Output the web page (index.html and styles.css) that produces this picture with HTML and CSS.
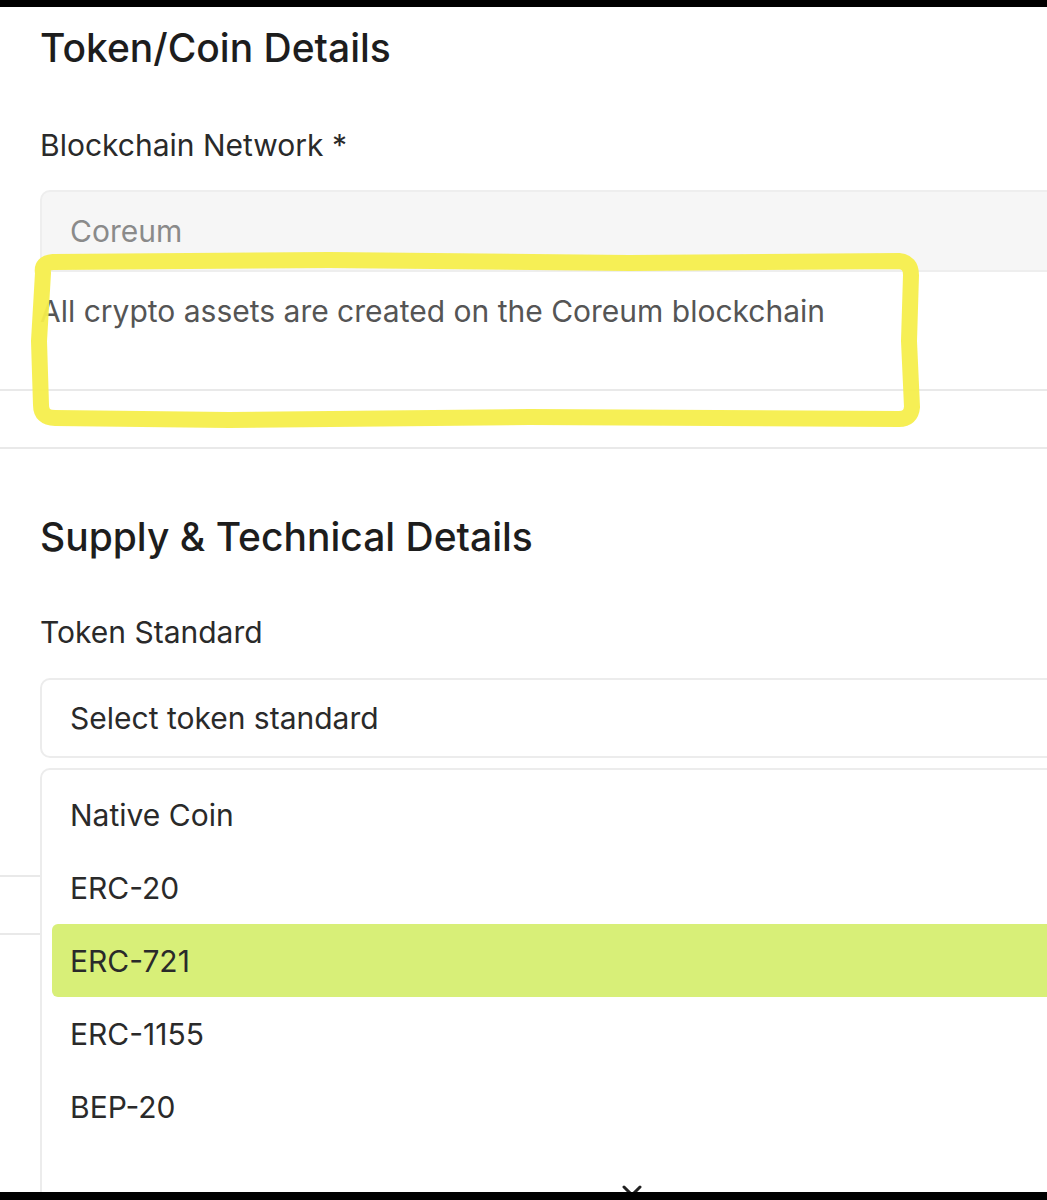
FILE: index.html
```html
<!DOCTYPE html>
<html>
<head>
<meta charset="utf-8">
<link rel="stylesheet" href="styles.css">
</head>
<body>
<div class="topbar"></div>
<div class="screen">
  <section class="section first">
    <h2 class="title">Token/Coin Details</h2>
    <div class="label">Blockchain Network *</div>
    <div class="input disabled">Coreum</div>
    <div class="helper">All crypto assets are created on the Coreum blockchain</div>
  </section>
  <div class="rule rule-a"></div>
  <div class="rule rule-b"></div>
  <section class="section second">
    <h2 class="title">Supply &amp; Technical Details</h2>
    <div class="label">Token Standard</div>
    <div class="select-wrap">
      <div class="input select">Select token standard</div>
      <ul class="menu">
        <li class="item">Native Coin</li>
        <li class="item">ERC-20</li>
        <li class="item active">ERC-721</li>
        <li class="item">ERC-1155</li>
        <li class="item">BEP-20</li>
        <li class="chev"><svg width="22" height="14" viewBox="0 0 22 14"><path d="M3 3 L11 11 L19 3" fill="none" stroke="#222" stroke-width="3" stroke-linecap="round" stroke-linejoin="round"/></svg></li>
      </ul>
    </div>
    <div class="rule rule-c"></div>
    <div class="rule rule-d"></div>
  </section>
  <svg class="annot" width="900" height="190" viewBox="0 0 900 190">
    <path d="M14 22 Q12 12 24 11 L300 9 L600 12 L870 10 Q882 11 882 24 L880 90 L883 156 Q882 168 870 168 L500 166 L200 169 L26 167 Q12 167 12 154 L10 90 Z" fill="none" stroke="#f6ee4c" stroke-width="16" stroke-linejoin="round" opacity="0.95"/>
  </svg>
</div>
<div class="bottombar"></div>
</body>
</html>
```
FILE: styles.css
```css
html, body {
  margin: 0;
  padding: 0;
  background: #fff;
}
body {
  font-family: "Inter", "Noto Sans", sans-serif;
  color: #222;
  overflow: hidden;
}
.topbar {
  height: 7px;
  background: #000;
}
.bottombar {
  height: 8px;
  background: #000;
}
.screen {
  position: relative;
  height: 1185px;
  overflow: hidden;
}
.section {
  padding-left: 40px;
}
.section.first {
  padding-top: 21px;
}
.title {
  margin: 0;
  font-size: 39px;
  line-height: 40px;
  font-weight: 500;
  color: #1d1d1d;
}
.label {
  margin-top: 60px;
  font-size: 30px;
  line-height: 34px;
  color: #2a2a2a;
}
.input {
  box-sizing: border-box;
  margin-top: 28px;
  margin-right: -30px;
  height: 82px;
  border: 2px solid #ececec;
  border-radius: 10px;
  padding-left: 28px;
  display: flex;
  align-items: center;
  font-size: 30px;
}
.input.disabled {
  background: #f6f6f6;
  color: #8a8a8a;
  border-color: #eeeeee;
  border-radius: 10px 0 0 0;
}
.helper {
  margin-top: 22px;
  font-size: 30px;
  line-height: 34px;
  color: #555;
}
.rule {
  height: 2px;
  background: #e9e9e9;
}
.rule-a {
  margin-top: 61px;
}
.rule-b {
  margin-top: 56px;
}
.section.second {
  padding-top: 68px;
}
.section.second .label {
  margin-top: 58px;
}
.select-wrap {
  position: relative;
}
.input.select {
  margin-top: 29px;
  height: 80px;
  background: #fff;
  color: #2a2a2a;
}
.menu {
  position: absolute;
  left: 0;
  right: -30px;
  top: 90px;
  height: 600px;
  margin: 0;
  padding: 8px 0 0 10px;
  list-style: none;
  background: #fff;
  border: 2px solid #ececec;
  border-radius: 10px;
  box-sizing: border-box;
}
.item {
  height: 73px;
  display: flex;
  align-items: center;
  padding-left: 18px;
  font-size: 30px;
  color: #2a2a2a;
}
.item.active {
  background: #d8ef78;
  border-radius: 6px 0 0 6px;
}
.chev {
  position: absolute;
  left: 579px;
  top: 412px;
}
.section.second .rule {
  margin-left: -40px;
}
.rule-c {
  margin-top: 117px;
}
.rule-d {
  margin-top: 56px;
}
.annot {
  position: absolute;
  left: 29px;
  top: 244px;
}
```
